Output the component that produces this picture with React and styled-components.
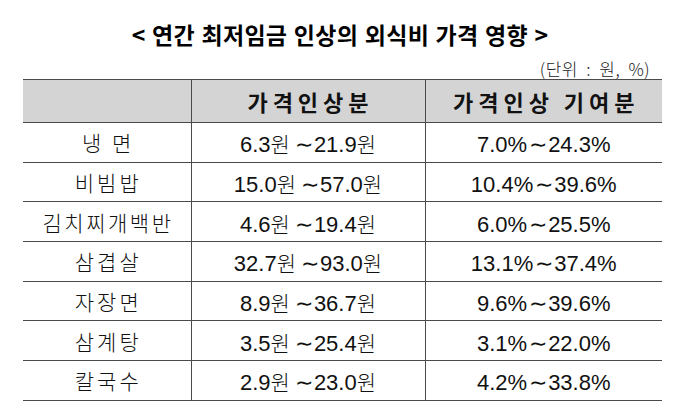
import React from "react";
import styled, { createGlobalStyle } from "styled-components";

const GlobalStyle = createGlobalStyle`
  body {
    margin: 0;
    background: #ffffff;
    font-family: "Noto Sans CJK KR", "Noto Sans", sans-serif;
    color: #111;
  }
`;

const Page = styled.div`
  width: 680px;
  height: 419px;
  overflow: hidden;
  padding-top: 18px;
  box-sizing: border-box;
`;

const Title = styled.h1`
  margin: 0;
  text-align: center;
  font-family: "Noto Sans CJK KR", sans-serif;
  font-size: 23px;
  font-weight: 700;
  line-height: 32px;
  letter-spacing: 0.3px;
  word-spacing: 1px;
  color: #000;
`;

const Unit = styled.div`
  margin-top: 9px;
  padding-right: 30px;
  text-align: right;
  font-family: "Noto Sans CJK KR", sans-serif;
  font-size: 17px;
  font-weight: 300;
  line-height: 20px;
  letter-spacing: 0.5px;
  word-spacing: 4px;
  color: #222;
`;

const Table = styled.table`
  margin: 0 0 0 23px;
  width: 639px;
  border-collapse: collapse;
  table-layout: fixed;
`;

const HeadRow = styled.tr`
  height: 43px;
  background: #d4d4d4;
`;

const Row = styled.tr`
  height: 39.7px;
`;

const Cell = styled.td`
  padding: 0;
  text-align: center;
  vertical-align: middle;
  border-top: 1px solid #4a4a4a;
  border-bottom: 1px solid #4a4a4a;
  & + & {
    border-left: 1px solid #4a4a4a;
  }
`;

const HeadCell = styled(Cell).attrs({ as: "th" })`
  font-family: "Noto Sans CJK KR", sans-serif;
  font-size: 22px;
  font-weight: 700;
  letter-spacing: ${(p) => p.$spacing || 4}px;
  padding-left: ${(p) => p.$spacing || 4}px;
  color: #111;
`;

const NameCell = styled(Cell)`
  font-family: "Noto Sans CJK KR", sans-serif;
  font-size: 21px;
  font-weight: 300;
  letter-spacing: ${(p) => p.$spacing}px;
  padding-left: ${(p) => p.$spacing}px;
  color: #111;
`;

const ValueCell = styled(Cell)`
  font-family: "Liberation Sans", "Noto Sans CJK KR", sans-serif;
  font-size: 22px;
  color: #111;
`;

const Hangul = styled.span`
  font-family: "Noto Sans CJK KR", sans-serif;
  font-weight: 300;
  font-size: 21px;
`;

const Tilde = styled.span`
  font-family: "Noto Sans CJK KR", sans-serif;
  font-weight: 300;
  font-size: 22px;
  margin: 0 1px 0 ${(p) => p.$gap}px;
`;

const rows = [
  { name: "냉 면", spacing: 3, won: ["6.3", "21.9"], pct: ["7.0", "24.3"] },
  { name: "비빔밥", spacing: 3, won: ["15.0", "57.0"], pct: ["10.4", "39.6"] },
  { name: "김치찌개백반", spacing: 2.5, won: ["4.6", "19.4"], pct: ["6.0", "25.5"] },
  { name: "삼겹살", spacing: 3, won: ["32.7", "93.0"], pct: ["13.1", "37.4"] },
  { name: "자장면", spacing: 3, won: ["8.9", "36.7"], pct: ["9.6", "39.6"] },
  { name: "삼계탕", spacing: 3, won: ["3.5", "25.4"], pct: ["3.1", "22.0"] },
  { name: "칼국수", spacing: 3, won: ["2.9", "23.0"], pct: ["4.2", "33.8"] },
];

export default function App() {
  return (
    <Page>
      <GlobalStyle />
      <Title>&lt; 연간 최저임금 인상의 외식비 가격 영향 &gt;</Title>
      <Unit>(단위 : 원, %)</Unit>
      <Table>
        <colgroup>
          <col style={{ width: 168 }} />
          <col style={{ width: 234 }} />
          <col style={{ width: 237 }} />
        </colgroup>
        <thead>
          <HeadRow>
            <HeadCell />
            <HeadCell $spacing={5}>가격인상분</HeadCell>
            <HeadCell $spacing={5}>가격인상 기여분</HeadCell>
          </HeadRow>
        </thead>
        <tbody>
          {rows.map((r) => (
            <Row key={r.name}>
              <NameCell $spacing={r.spacing}>{r.name}</NameCell>
              <ValueCell>
                {r.won[0]}
                <Hangul>원</Hangul>
                <Tilde $gap={5}>∼</Tilde>
                {r.won[1]}
                <Hangul>원</Hangul>
              </ValueCell>
              <ValueCell>
                {r.pct[0]}%<Tilde $gap={2}>∼</Tilde>
                {r.pct[1]}%
              </ValueCell>
            </Row>
          ))}
        </tbody>
      </Table>
    </Page>
  );
}
